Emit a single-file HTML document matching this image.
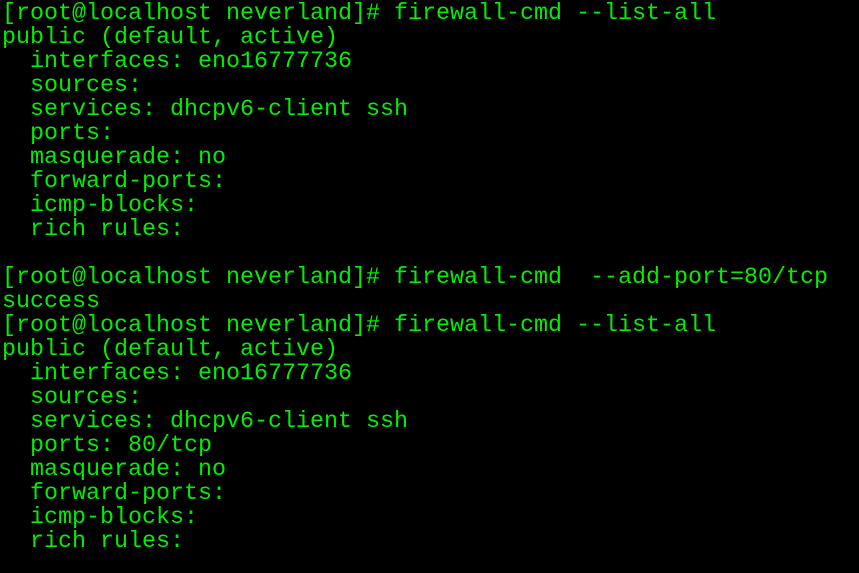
<!DOCTYPE html><html><head><style>
html,body{margin:0;background:#000;width:859px;height:573px;overflow:hidden}
pre{margin:0;padding:0 0 0 2px;position:relative;top:2px;font-family:"Liberation Mono",monospace;font-size:23.33px;line-height:24px;color:#00ee00;}
</style></head><body><pre>[root@localhost neverland]# firewall-cmd --list-all
public (default, active)
  interfaces: eno16777736
  sources:
  services: dhcpv6-client ssh
  ports:
  masquerade: no
  forward-ports:
  icmp-blocks:
  rich rules:

[root@localhost neverland]# firewall-cmd  --add-port=80/tcp
success
[root@localhost neverland]# firewall-cmd --list-all
public (default, active)
  interfaces: eno16777736
  sources:
  services: dhcpv6-client ssh
  ports: 80/tcp
  masquerade: no
  forward-ports:
  icmp-blocks:
  rich rules:
</pre></body></html>
